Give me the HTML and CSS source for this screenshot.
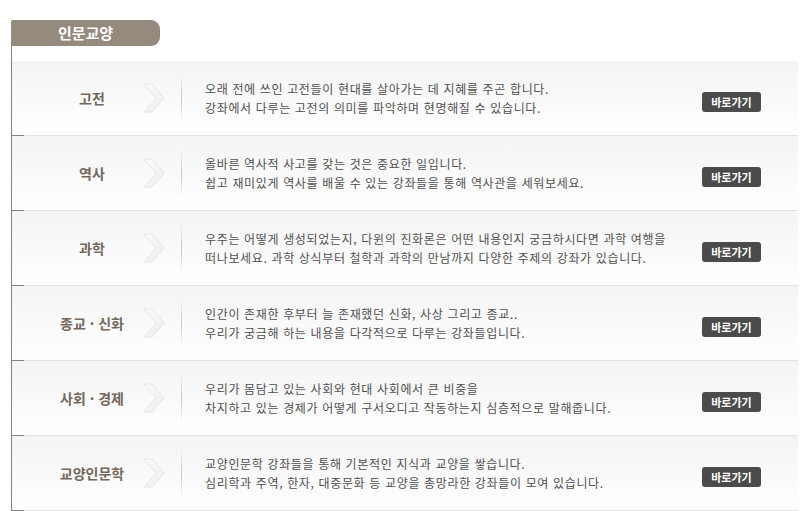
FILE: index.html
```html
<!DOCTYPE html>
<html lang="ko">
<head>
    <meta charset="UTF-8">
    <meta name="viewport" content="width=device-width, initial-scale=1.0">
    <title>인문교양</title>
    <link rel="stylesheet" href="styles.css">
</head>
<body>
    <div class="section">
        <h2 class="tab">인문교양</h2>

        <!-- Course categories -->
        <ul class="list">
            <li class="item">
                <strong class="title">고전</strong>
                <span class="arrow"><svg width="22" height="30" viewBox="0 0 22 30"><defs><linearGradient id="g1" x1="0" y1="0" x2="1" y2="1"><stop offset="0" stop-color="#fcfcfc"/><stop offset="1" stop-color="#ececec"/></linearGradient></defs><polygon points="1,1 9,1 21,15 9,29 1,29 13,15" fill="url(#g1)" stroke="#e6e6e6"/></svg></span>
                <span class="divider"></span>
                <p class="desc">오래 전에 쓰인 고전들이 현대를 살아가는 데 지혜를 주곤 합니다.<br>강좌에서 다루는 고전의 의미를 파악하며 현명해질 수 있습니다.</p>
                <a class="btn" href="#">바로가기</a>
            </li>
            <li class="item">
                <strong class="title">역사</strong>
                <span class="arrow"><svg width="22" height="30" viewBox="0 0 22 30"><polygon points="1,1 9,1 21,15 9,29 1,29 13,15" fill="url(#g1)" stroke="#e6e6e6"/></svg></span>
                <span class="divider"></span>
                <p class="desc">올바른 역사적 사고를 갖는 것은 중요한 일입니다.<br>쉽고 재미있게 역사를 배울 수 있는 강좌들을 통해 역사관을 세워보세요.</p>
                <a class="btn" href="#">바로가기</a>
            </li>
            <li class="item">
                <strong class="title">과학</strong>
                <span class="arrow"><svg width="22" height="30" viewBox="0 0 22 30"><polygon points="1,1 9,1 21,15 9,29 1,29 13,15" fill="url(#g1)" stroke="#e6e6e6"/></svg></span>
                <span class="divider"></span>
                <p class="desc">우주는 어떻게 생성되었는지, 다윈의 진화론은 어떤 내용인지 궁금하시다면 과학 여행을<br>떠나보세요. 과학 상식부터 철학과 과학의 만남까지 다양한 주제의 강좌가 있습니다.</p>
                <a class="btn" href="#">바로가기</a>
            </li>
            <li class="item">
                <strong class="title">종교 · 신화</strong>
                <span class="arrow"><svg width="22" height="30" viewBox="0 0 22 30"><polygon points="1,1 9,1 21,15 9,29 1,29 13,15" fill="url(#g1)" stroke="#e6e6e6"/></svg></span>
                <span class="divider"></span>
                <p class="desc">인간이 존재한 후부터 늘 존재했던 신화, 사상 그리고 종교..<br>우리가 궁금해 하는 내용을 다각적으로 다루는 강좌들입니다.</p>
                <a class="btn" href="#">바로가기</a>
            </li>
            <li class="item">
                <strong class="title">사회 · 경제</strong>
                <span class="arrow"><svg width="22" height="30" viewBox="0 0 22 30"><polygon points="1,1 9,1 21,15 9,29 1,29 13,15" fill="url(#g1)" stroke="#e6e6e6"/></svg></span>
                <span class="divider"></span>
                <p class="desc">우리가 몸담고 있는 사회와 현대 사회에서 큰 비중을<br>차지하고 있는 경제가 어떻게 구서오디고 작동하는지 심층적으로 말해줍니다.</p>
                <a class="btn" href="#">바로가기</a>
            </li>
            <li class="item">
                <strong class="title">교양인문학</strong>
                <span class="arrow"><svg width="22" height="30" viewBox="0 0 22 30"><polygon points="1,1 9,1 21,15 9,29 1,29 13,15" fill="url(#g1)" stroke="#e6e6e6"/></svg></span>
                <span class="divider"></span>
                <p class="desc">교양인문학 강좌들을 통해 기본적인 지식과 교양을 쌓습니다.<br>심리학과 주역, 한자, 대중문화 등 교양을 총망라한 강좌들이 모여 있습니다.</p>
                <a class="btn" href="#">바로가기</a>
            </li>
        </ul>
    </div>
</body>
</html>
```

FILE: styles.css
```css
body {
    margin: 0;
    font-family: "Noto Sans CJK KR", "Noto Sans", sans-serif;
    background: #fff;
}
.section {
    padding: 20px 3px 0 11px;
}
.tab {
    margin: 0;
    width: 149px;
    height: 26px;
    line-height: 26px;
    background-color: #958a7e;
    border-radius: 2px 9px 9px 0;
    color: #fff;
    font-size: 15px;
    font-weight: bold;
    text-align: center;
}
.list {
    list-style: none;
    margin: 0;
    padding: 15px 0 0;
    border-left: 1px solid #8b8177;
}
.item {
    position: relative;
    display: flex;
    align-items: center;
    height: 74px;
    border-bottom: 1px solid #e2e2e2;
    background: linear-gradient(#f4f4f4, #fff);
}
.item::after {
    content: "";
    position: absolute;
    left: 0;
    bottom: -1px;
    width: 12px;
    height: 1px;
    background-color: #8b8177;
}
.title {
    box-sizing: border-box;
    width: 131px;
    padding-left: 29px;
    text-align: center;
    color: #75685b;
    font-size: 14px;
    white-space: nowrap;
}
.arrow {
    display: flex;
    width: 22px;
    height: 30px;
}
.divider {
    width: 1px;
    height: 48px;
    margin: 0 23px 0 16px;
    background: linear-gradient(rgba(213, 205, 196, 0), #d5cdc4 40%, #d5cdc4 60%, rgba(213, 205, 196, 0));
}
.desc {
    flex: 1;
    margin: 0;
    color: #505050;
    font-size: 12px;
    line-height: 19px;
    letter-spacing: 0.65px;
    white-space: nowrap;
}
.btn {
    width: 59px;
    height: 20px;
    margin: 8px 37px 0 0;
    line-height: 20px;
    border-radius: 3px;
    background-color: #4b4b4b;
    color: #fff;
    font-size: 11px;
    font-weight: bold;
    text-align: center;
    text-decoration: none;
}
```
